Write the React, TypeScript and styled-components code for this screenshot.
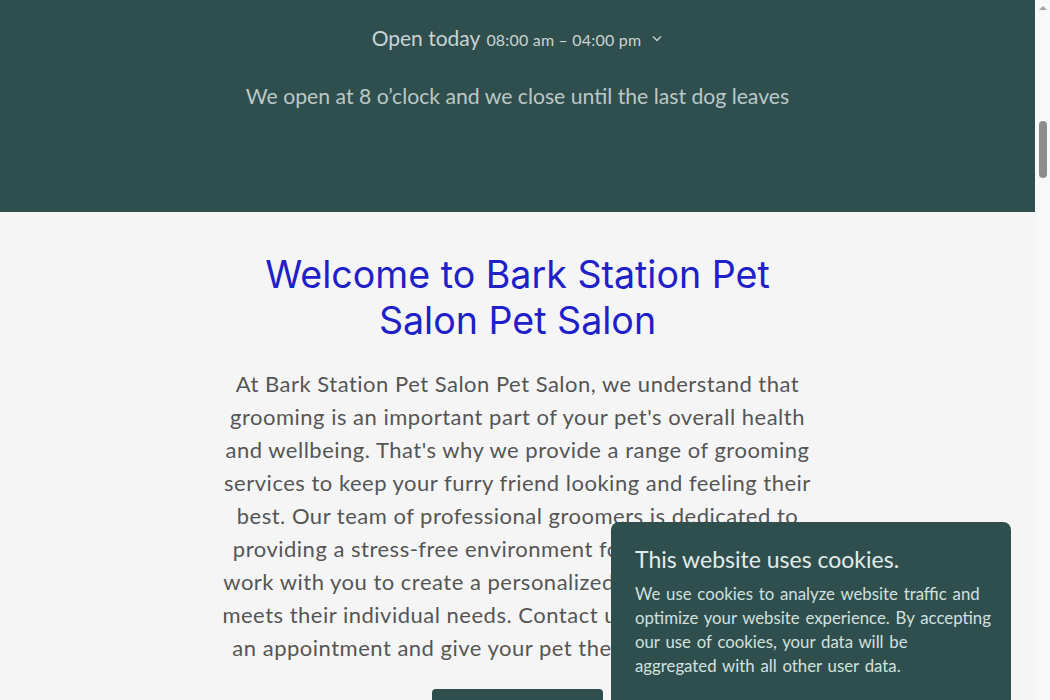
import React from "react";
import styled, { createGlobalStyle } from "styled-components";

const Global = createGlobalStyle`
  html, body { margin: 0; height: 100%; overflow: hidden; }
  body { background: #f5f5f5; font-family: "Lato", "Noto Sans", sans-serif; }
`;

const Frame = styled.div`
  display: flex;
  height: 700px;
`;

const Page = styled.div`
  flex: 1;
  min-width: 0;
  overflow: hidden;
  background: #f5f5f5;
`;

const ScrollTrack = styled.div`
  width: 15px;
  flex: none;
  background: #f8f8f8;
  display: flex;
  flex-direction: column;
  align-items: center;
  padding-top: 6px;
  box-sizing: border-box;
`;

const ArrowUp = styled.div`
  width: 0;
  height: 0;
  border-left: 4px solid transparent;
  border-right: 4px solid transparent;
  border-bottom: 4px solid #a3a3a3;
`;

const Thumb = styled.div`
  margin-top: 111px;
  width: 8px;
  height: 57px;
  border-radius: 4px;
  background: #8d8d8d;
`;

const Hero = styled.section`
  background: #2f4f4f;
  height: 212px;
  display: flex;
  flex-direction: column;
  align-items: center;
  padding-top: 25px;
  box-sizing: border-box;
  color: #c9d3d1;
`;

const HoursRow = styled.div`
  display: flex;
  align-items: baseline;
  gap: 6px;
`;

const HoursLabel = styled.span`
  font-size: 21px;
`;

const HoursTime = styled.span`
  font-size: 16px;
  letter-spacing: 0.2px;
`;

const Chevron = styled.svg`
  width: 12px;
  height: 12px;
  margin-left: 4px;
  align-self: center;
`;

const Tagline = styled.p`
  margin: 33px 0 0;
  font-size: 21.2px;
  color: #bcc8c6;
`;

const Main = styled.main`
  display: flex;
  flex-direction: column;
  align-items: center;
  padding: 40px 0 400px;
`;

const Title = styled.h1`
  margin: 0;
  width: 560px;
  text-align: center;
  font-weight: 400;
  font-size: 37.6px;
  line-height: 46px;
  color: #2020c8;
  font-family: "Inter", "Noto Sans", sans-serif;
`;

const Body = styled.p`
  margin: 23px 0 0;
  width: 600px;
  text-align: center;
  font-size: 22px;
  letter-spacing: 0.5px;
  line-height: 33px;
  color: #555;
`;

const CTA = styled.button`
  margin-top: 25px;
  width: 171px;
  height: 52px;
  border: none;
  border-radius: 4px;
  background: #2f4f4f;
  color: #fff;
  font-family: inherit;
  font-size: 16px;
`;

const Cookie = styled.div`
  position: fixed;
  left: 611px;
  top: 522px;
  width: 400px;
  height: 240px;
  box-sizing: border-box;
  padding: 22px 19px 22px 24px;
  background: #2f4f4f;
  border-radius: 8px;
  color: #e2ecea;
`;

const CookieTitle = styled.h2`
  margin: 0;
  font-weight: 400;
  font-size: 23px;
  line-height: 30px;
`;

const CookieText = styled.p`
  margin: 8px 0 0;
  font-size: 16.8px;
  word-spacing: 1.5px;
  line-height: 24px;
  color: #d3e0de;
`;

export default function App() {
  return (
    <>
      <Global />
      <Frame>
        <Page>
          <Hero>
            <HoursRow>
              <HoursLabel>Open today</HoursLabel>
              <HoursTime>08:00 am – 04:00 pm</HoursTime>
              <Chevron viewBox="0 0 12 12" fill="none" stroke="#c9d3d1" strokeWidth="1.3">
                <path d="M2 4.5l4 4 4-4" />
              </Chevron>
            </HoursRow>
            <Tagline>We open at 8 o’clock and we close until the last dog leaves</Tagline>
          </Hero>
          <Main>
            <Title>Welcome to Bark Station Pet Salon Pet Salon</Title>
            <Body>
              At Bark Station Pet Salon Pet Salon, we understand that grooming is an important part of your pet's overall health and wellbeing. That's why we provide a range of grooming services to keep your furry friend looking and feeling their best. Our team of professional groomers is dedicated to providing a stress-free environment for your pet, and we work with you to create a personalized grooming plan that meets their individual needs. Contact us today to schedule an appointment and give your pet the care they deserve!
            </Body>
            <CTA>Book now</CTA>
          </Main>
        </Page>
        <ScrollTrack aria-hidden="true">
          <ArrowUp />
          <Thumb />
        </ScrollTrack>
      </Frame>
      <Cookie>
        <CookieTitle>This website uses cookies.</CookieTitle>
        <CookieText>
          We use cookies to analyze website traffic and optimize your website experience. By accepting our use of cookies, your data will be aggregated with all other user data.
        </CookieText>
      </Cookie>
    </>
  );
}
